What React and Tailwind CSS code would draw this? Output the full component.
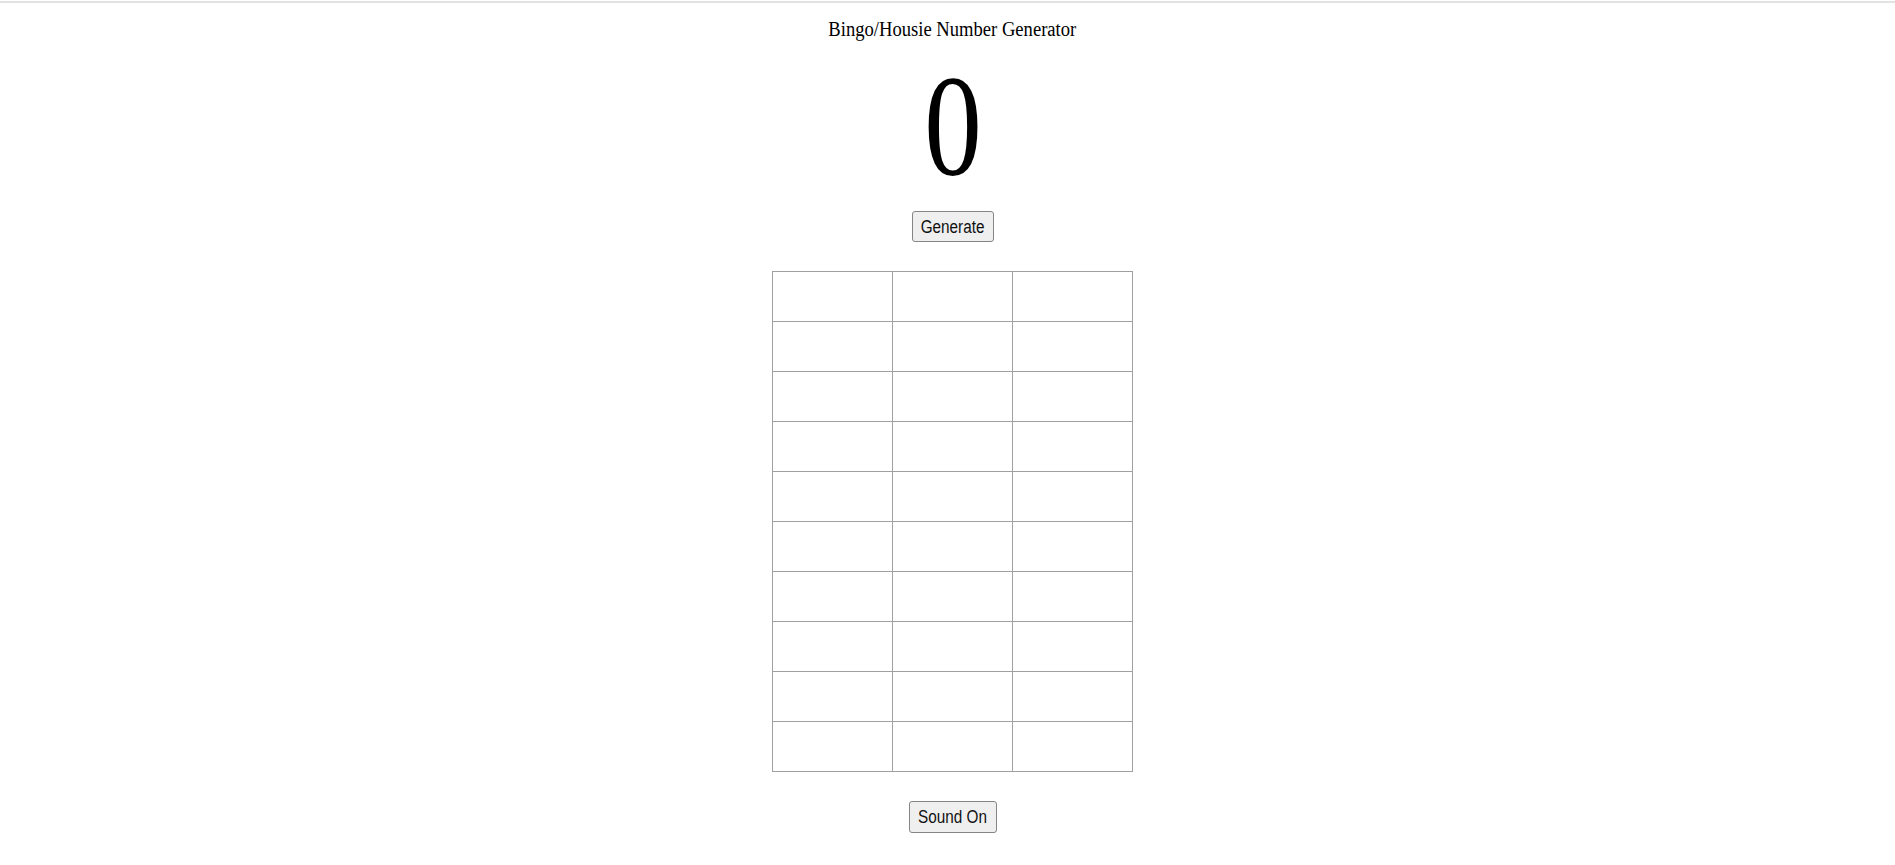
const ROWS = Array.from({ length: 10 }, (_, i) => i);
const COLS = [0, 1, 2];

function OldButton({ label, width }) {
  return (
    <button
      className={`h-[31px] ${width} flex items-center justify-center rounded-[3px] border border-[#858585] bg-[#efefef] text-[#111] text-[18px] leading-none`}
      style={{ fontFamily: '"Liberation Sans", Arial, sans-serif' }}
    >
      <span className="inline-block scale-x-[0.85] whitespace-nowrap">{label}</span>
    </button>
  );
}

export default function App() {
  return (
    <div className="min-h-[865px] bg-white">
      <div className="pt-[1px]">
        <div className="h-[2px] bg-[#e2e2e2]" />
      </div>

      <div className="flex flex-col items-center pl-[10px]" style={{ fontFamily: '"Liberation Serif", "Times New Roman", serif' }}>
        {/* Title */}
        <p className="mt-[14px] text-[20px] leading-[24px] text-black">
          <span className="inline-block scale-x-[0.93] whitespace-nowrap">Bingo/Housie Number Generator</span>
        </p>

        {/* Current number */}
        <div className="mt-[11px] h-[150px] text-[144px] leading-[150px] text-black">
          <span className="inline-block scale-x-[0.8]">0</span>
        </div>

        <div className="mt-[9px]">
          <OldButton label="Generate" width="w-[82px]" />
        </div>

        {/* Board */}
        <table className="mt-[29px] border-collapse">
          <tbody>
            {ROWS.map(r => (
              <tr key={r}>
                {COLS.map(c => (
                  <td key={c} className="w-[120px] h-[50px] border border-[#a0a0a0] p-0" />
                ))}
              </tr>
            ))}
          </tbody>
        </table>

        <div className="mt-[29px]">
          <OldButton label="Sound On" width="w-[88px] h-[32px]" />
        </div>
      </div>
    </div>
  );
}
